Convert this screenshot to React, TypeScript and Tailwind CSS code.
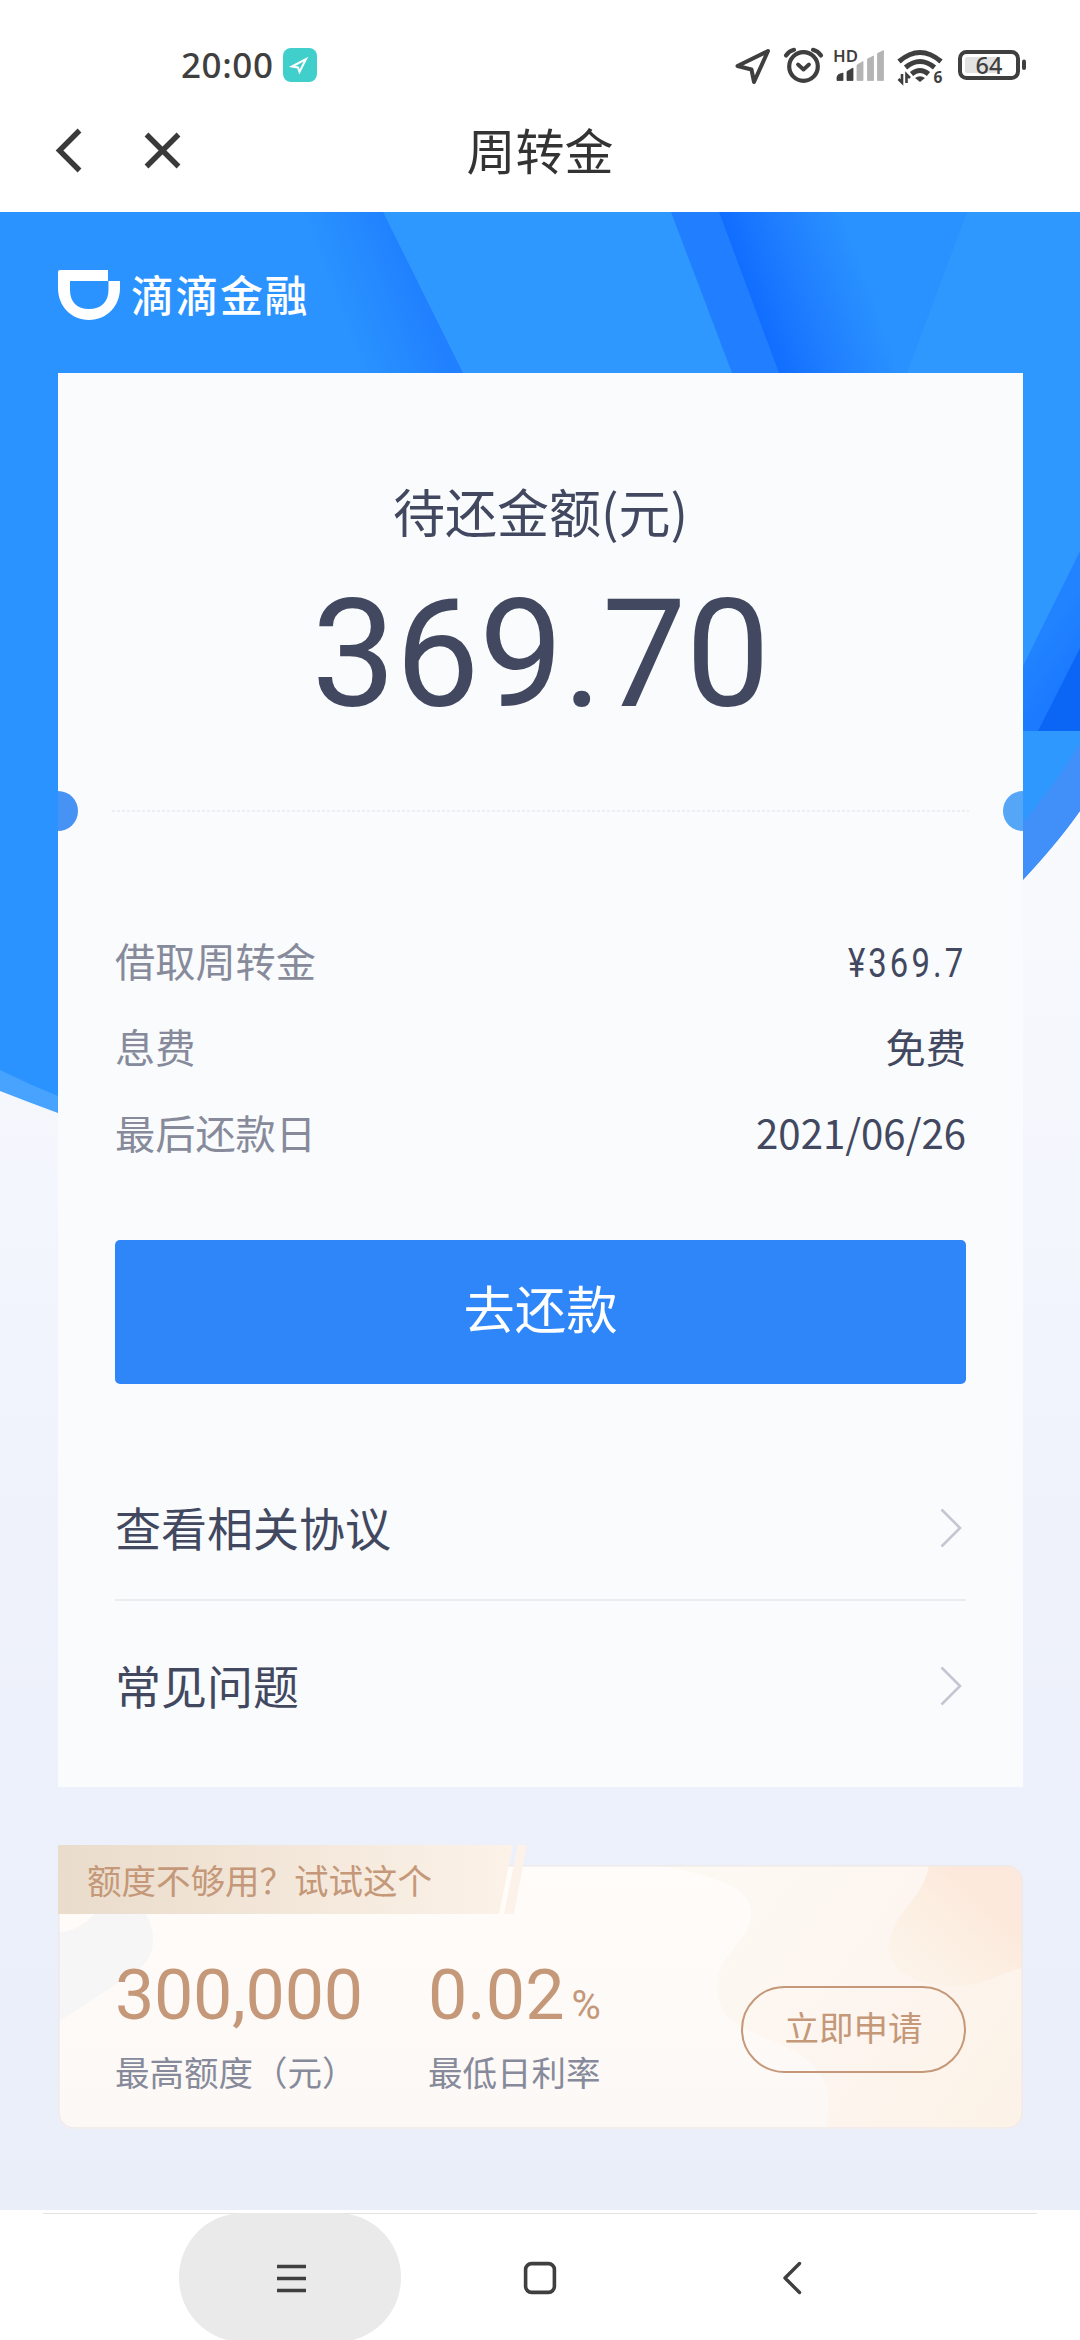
import React from "react";

const CJK = "font-['Noto_Sans_CJK_SC',sans-serif]";

function StatusBar() {
  return (
    <div className="flex h-[130px] items-center pl-[181px] pr-[54px] text-[#3f3f3f]">
      <span className="font-['Noto_Sans','Noto_Sans_CJK_SC',sans-serif] text-[35px] leading-[48px] font-medium tracking-[0.600px]">20:00</span>
      <div className="ml-[9px] flex h-[34px] w-[34px] items-center justify-center rounded-[8px] bg-[#40cfcb]">
        <svg width="34" height="34" viewBox="0 0 34 34" fill="none" stroke="#fff" strokeWidth="2">
          <path d="M9 18.5 23 11 16.5 24 15 19.5Z" />
        </svg>
      </div>
      <svg className="ml-auto" width="292" height="44" viewBox="734 43 292 44" fill="none" stroke="#3f3f3f">
        <path d="M737.5 66 768 51 754 82 751.5 69.5Z" strokeWidth="4" strokeLinejoin="round" />
        <circle cx="803.5" cy="66.500" r="14.300" strokeWidth="4.200" />
        <path d="M786 55.500Q789 51 794 49.800M821 55.500Q818 51 813 49.800" strokeWidth="4.200" strokeLinecap="round" />
        <path d="M798 64.500 803.500 69.500 809 64.500" strokeWidth="3.800" strokeLinecap="round" strokeLinejoin="round" />
        <g stroke="none">
          <text x="833" y="61.500" fill="#3f3f3f" fontSize="16.500" fontWeight="600" fontFamily="Noto Sans" textLength="25" lengthAdjust="spacingAndGlyphs">HD</text>
          <path d="M837 80.500V77Q837 74 843 73V80.500ZM847 80.500V71.500L853 68V80.500Z" fill="#3f3f3f" stroke="#3f3f3f" strokeWidth="0.800" />
          <path d="M857 80.500V65L863 61.500V80.500ZM867.500 80.500V59L873.500 56V80.500ZM877.500 80.500V53.500L883.500 50.500V80.500Z" fill="#b4b4b4" stroke="#b4b4b4" strokeWidth="0.800" />
        </g>
        <path d="M899 61.500Q920 43.500 941 61.500" strokeWidth="5" />
        <path d="M905.500 67.500Q920 55.500 934.500 67.500" strokeWidth="5" />
        <path d="M911.500 74Q920 67 928.500 74" strokeWidth="5" />
        <path d="M915 78Q920 74.500 925 78L920 82Z" fill="#3f3f3f" stroke="none" />
        <path d="M902 74V82.500L898.500 79M906.500 83V74.500L910 78" strokeWidth="2.600" />
        <text x="933.500" y="82.800" fill="#3f3f3f" stroke="none" fontSize="15.500" fontWeight="700" fontFamily="Noto Sans">6</text>
        <rect x="965" y="57" width="32" height="16" rx="2" fill="#e2e2e2" stroke="none" />
        <rect x="960" y="52" width="58" height="26" rx="6.500" strokeWidth="4" />
        <path d="M1024 61.500V68" strokeWidth="4" strokeLinecap="round" />
        <text x="989" y="73.800" textAnchor="middle" fill="#3f3f3f" stroke="none" fontSize="23.500" fontWeight="500" fontFamily="Noto Sans">64</text>
      </svg>
    </div>
  );
}

function NavHeader() {
  return (
    <div className="flex h-[82px] items-start">
      <svg className="flex-none" width="200" height="60" viewBox="0 130 200 60" overflow="visible" fill="none" stroke="#3a3a3a" strokeWidth="5.400">
        <path d="M79.500 130.500 59.500 150.500 79.500 170.500" />
        <path d="M146.500 134.500 178.500 166.500M178.500 134.500 146.500 166.500" />
      </svg>
      <h1 className={`${CJK} mt-[-15px] mr-[200px] flex-1 text-center text-[49px] leading-[68px] font-normal text-[#333]`}>周转金</h1>
    </div>
  );
}

/* Decorative hero artwork behind the cards */
function Backdrop() {
  return (
    <svg className="absolute inset-x-0 top-0" width="1080" height="920" viewBox="0 212 1080 920">
      <defs>
        <linearGradient id="edge" gradientUnits="userSpaceOnUse" x1="341" y1="315" x2="421" y2="285">
          <stop offset="0" stopColor="#2a93ff" />
          <stop offset="1" stopColor="#2080ff" />
        </linearGradient>
        <linearGradient id="fold" gradientUnits="userSpaceOnUse" x1="740" y1="270" x2="850" y2="230">
          <stop offset="0" stopColor="#116dff" />
          <stop offset="0.500" stopColor="#2080ff" />
          <stop offset="1" stopColor="#2a92ff" />
        </linearGradient>
        <linearGradient id="band" gradientUnits="userSpaceOnUse" x1="1040" y1="640" x2="1075" y2="665">
          <stop offset="0" stopColor="#2183ff" />
          <stop offset="1" stopColor="#1b7aff" />
        </linearGradient>
      </defs>
      <path d="M0 212H1080V811Q1055 845 1023 880L600 1132H100L58 1113Q28 1102 0 1091Z" fill="#48a3ff" />
      <path d="M0 212H1080V745Q1055 785 1023 825L600 1132H160L58 1096Q28 1084 0 1070Z" fill="#2a93ff" />
      <path d="M1080 743Q1055 785 1015 832V888Q1055 847 1080 811Z" fill="#418ff8" />
      <path d="M220 212H384L464 373H300Z" fill="url(#edge)" />
      <path d="M383 212H672L733 373H463Z" fill="#2e98ff" />
      <path d="M671 212H720L780 373H732Z" fill="#217fff" />
      <path d="M719 212H967L907 373H779Z" fill="url(#fold)" />
      <path d="M967 212H1080V743Q1055 785 1015 832V373H907Z" fill="#2e98ff" />
      <path d="M1080 551 1015 682V731H1080Z" fill="url(#band)" />
      <path d="M1080 648 1038 731H1080Z" fill="#0c66f5" />
    </svg>
  );
}

function Brand() {
  return (
    <div className="relative flex h-[161px] items-start pl-[58px] pt-[58px] text-white">
      <svg width="62" height="52" viewBox="0 0 62 52">
        <path d="M2 0H50V11H62V18C62 36 49 50 31 50S0 36 0 18V2Q0 0 2 0ZM12 11V20C12 32 19 39 31 39S50.500 32 50.500 20V11Z" fill="#fff" fillRule="evenodd" />
      </svg>
      <span className={`${CJK} ml-[11px] mt-[-9px] text-[43px] leading-[64px] font-medium tracking-[1.500px]`}>滴滴金融</span>
    </div>
  );
}

const rows = [
  { label: "借取周转金", value: "¥369.7", narrow: true },
  { label: "息费", value: "免费" },
  { label: "最后还款日", value: "2021/06/26" },
];

function Detail({ label, value, narrow }: { label: string; value: string; narrow?: boolean }) {
  return (
    <div className={`${CJK} flex h-[86px] items-center justify-between text-[40.200px] leading-[60px]`}>
      <span className="text-[#868a9a]">{label}</span>
      {narrow ? (
        <span className="origin-right scale-x-[0.820] pt-[7px] font-['Roboto',sans-serif] text-[40px] tracking-[3.800px] text-[#42485f]">{value}</span>
      ) : (
        <span className="text-[#42485f]">{value}</span>
      )}
    </div>
  );
}

function LinkRow({ children }: { children: React.ReactNode }) {
  return (
    <div className="flex items-center justify-between pr-[4px]">
      <span className={`${CJK} mt-[-2px] mb-[2px] text-[46px] leading-[68px] text-[#42485f]`}>{children}</span>
      <svg width="22" height="40" viewBox="0 0 22 40" fill="none" stroke="#c4c7d2" strokeWidth="2.600">
        <path d="M1.500 1.500 20 20 1.500 38.500" />
      </svg>
    </div>
  );
}

function RepayCard() {
  return (
    <section className="relative mx-[58px] h-[1414px] w-[965px] overflow-hidden bg-[#f9fbfd] px-[57px]">
      <span className="absolute left-[-20px] top-[418px] h-[40px] w-[40px] rounded-full bg-[#4793f5]" />
      <span className="absolute right-[-20px] top-[418px] h-[40px] w-[40px] rounded-full bg-[#55a6f7]" />
      <div className={`${CJK} pt-[100px] text-center text-[52px] leading-[76px] text-[#42485f]`}>待还金额(元)</div>
      <div className="mt-[18px] text-center font-['Roboto',sans-serif] text-[150px] leading-[176px] tracking-[-0.500px] text-[#42485f]">369.70</div>
      <svg className="mx-[-3px] mt-[67px] block" width="857" height="2" viewBox="0 0 857 2">
        <path d="M0 1H857" stroke="#dfe2e8" strokeWidth="1.200" strokeDasharray="3 2" />
      </svg>
      <div className="mt-[105px]">
        {rows.map((r) => (
          <Detail key={r.label} {...r} />
        ))}
      </div>
      <button className={`${CJK} mt-[65px] block h-[144px] w-[851px] rounded-[5px] bg-[#2f86f8] pb-[10px] text-[51.300px] leading-[76px] text-white`}>去还款</button>
      <div className="mt-[110px]">
        <LinkRow>查看相关协议</LinkRow>
        <div className="mt-[37px] mb-[51px] h-[2px] bg-[#eaecf0]" />
        <LinkRow>常见问题</LinkRow>
      </div>
    </section>
  );
}

function PromoCard() {
  return (
    <section className="relative mx-[58px] mt-[58px] h-[283px] w-[965px]">
      <svg className="absolute left-0 top-0" width="965" height="284" viewBox="58 1845 965 284">
        <defs>
          <linearGradient id="ribbon" x1="0" x2="1">
            <stop offset="0" stopColor="#eadccb" />
            <stop offset="1" stopColor="#fcf2e8" />
          </linearGradient>
          <linearGradient id="cream" x1="0" y1="0" x2="0" y2="1">
            <stop offset="0" stopColor="#fffcf9" />
            <stop offset="1" stopColor="#fcf8f5" />
          </linearGradient>
          <linearGradient id="wave" gradientUnits="userSpaceOnUse" x1="660" y1="1880" x2="1010" y2="2128">
            <stop offset="0" stopColor="#fdf9f3" />
            <stop offset="0.450" stopColor="#fdf6f1" />
            <stop offset="1" stopColor="#fcf2e7" />
          </linearGradient>
          <linearGradient id="peach" x1="0" y1="1" x2="1" y2="0">
            <stop offset="0" stopColor="#fdf5eb" />
            <stop offset="0.450" stopColor="#fcefe2" />
            <stop offset="0.700" stopColor="#fce9dc" />
            <stop offset="1" stopColor="#fce8dc" />
          </linearGradient>
          <clipPath id="promo">
            <rect x="58" y="1865" width="965" height="264" rx="16" />
          </clipPath>
        </defs>
        <g clipPath="url(#promo)">
          <rect x="58" y="1865" width="965" height="264" fill="url(#cream)" />
          <path d="M58 1932Q79 1932 96 1912H145Q154 1928 153 1943Q151 1963 133 1973Q96 1998 58 2022Z" fill="#f7f6f7" />
          <path d="M655 1865C715 1875 754 1889 751 1915C748 1945 714 1955 717 1990C720 2044 800 2030 826 2084Q830 2105 826 2129H1023V1865Z" fill="url(#wave)" />
          <path d="M929 1865C923 1901 893 1910 890 1944C887 1975 928 1991 972 1985C994 1980 1005 1971 1023 1968V1865Z" fill="url(#peach)" />
        </g>
        <rect x="58.800" y="1865.800" width="963.400" height="262.200" rx="15.500" fill="none" stroke="#eeeaeb" strokeWidth="1.600" />
        <path d="M58 1845H513L499 1914H58Z" fill="url(#ribbon)" />
        <path d="M518 1845H527L514 1914H504Z" fill="#fcf2e9" />
      </svg>
      <div className={`${CJK} relative pl-[29px] pt-[9px] text-[34.500px] leading-[50px] text-[#c49878]`}>额度不够用？试试这个</div>
      <div className="relative mt-[46px] flex items-start px-[57px]">
        <div className="w-[313px]">
          <div className="pt-[3px] font-['Roboto',sans-serif] text-[70px] leading-[84px] tracking-[-0.300px] text-[#c49878]">300,000</div>
          <div className={`${CJK} mt-[9px] text-[34.500px] leading-[50px] text-[#868a9a]`}>最高额度（元）</div>
        </div>
        <div>
          <div className="flex items-baseline pt-[3px] font-['Roboto',sans-serif] text-[70px] leading-[84px] text-[#c49878]">
            0.02
            <span className="ml-[7px] inline-block text-[40px] leading-[50px]">%</span>
          </div>
          <div className={`${CJK} mt-[9px] text-[34.500px] leading-[50px] text-[#868a9a]`}>最低日利率</div>
        </div>
        <button className={`${CJK} ml-auto mt-[36px] h-[87px] w-[225px] rounded-full border-2 border-[#c49878] pb-[7px] text-[34.500px] leading-[50px] text-[#c49878]`}>立即申请</button>
      </div>
    </section>
  );
}

function SystemNav() {
  return (
    <div className="h-[130px] overflow-hidden bg-white pt-[3px]">
      <div className="mx-[43px] h-px bg-[#e3e3e3]" />
      <div className="mt-[-1px] flex items-start">
        <div className="ml-[179px] flex h-[129px] w-[222px] flex-none items-center justify-center rounded-[64px] bg-[#eaeaea]">
          <svg width="32" height="32" viewBox="0 0 32 32" stroke="#3f3f3f" strokeWidth="3.600">
            <path d="M3 4H33M3 16H33M3 28H33" transform="translate(0 0.500)" />
          </svg>
        </div>
        <svg className="ml-[121px] mt-[47px] flex-none" width="36" height="36" viewBox="0 0 36 36" fill="none" stroke="#3f3f3f" strokeWidth="3.600">
          <rect x="3.600" y="3.600" width="28.800" height="28.800" rx="6" />
        </svg>
        <svg className="ml-[223px] mt-[47px] flex-none" width="24" height="36" viewBox="0 0 24 36" fill="none" stroke="#3f3f3f" strokeWidth="3.400" strokeLinecap="round" strokeLinejoin="round">
          <path d="M18.500 3.500 4 18 18.500 32.500" />
        </svg>
      </div>
    </div>
  );
}

export default function App() {
  return (
    <div className="flex h-[2340px] w-[1080px] flex-col overflow-hidden bg-white">
      <header className="h-[212px] flex-none bg-white">
        <StatusBar />
        <NavHeader />
      </header>
      <main className="relative h-[1998px] flex-none overflow-hidden bg-gradient-to-b from-[#f8fafd] from-30% via-[#f0f3fc] via-62% to-[#e9eef9]">
        <Backdrop />
        <Brand />
        <RepayCard />
        <PromoCard />
      </main>
      <SystemNav />
    </div>
  );
}
